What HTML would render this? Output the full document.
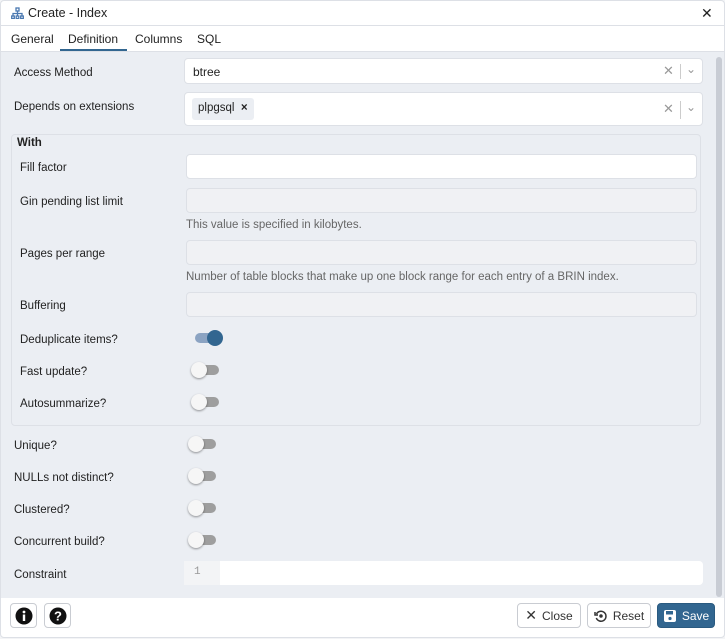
<!DOCTYPE html>
<html><head><meta charset="utf-8"><style>
*{box-sizing:border-box;margin:0;padding:0}
body{width:725px;height:639px;background:#f3f4f6;font-family:"Liberation Sans",sans-serif;font-size:12px;color:#222;position:relative;overflow:hidden}
.dlg{position:absolute;left:0;top:0;width:725px;height:638px;background:#fff;border:1px solid #dde0e6;border-radius:4px;overflow:hidden}
.abs{position:absolute}
.title{left:0;top:0;width:723px;height:25px;border-bottom:1px solid #dde0e6}
.tabs{left:0;top:25px;width:723px;height:26px;border-bottom:1px solid #dde0e6}
.content{left:0;top:51px;width:723px;height:546px;background:#ebeef3}
.lbl{position:absolute;font-size:11.5px;color:#222;margin-top:2px}
.inp{position:absolute;background:#fff;border:1px solid #dde0e6;border-radius:4px}
.dis{background:#f0f1f4}
.help{position:absolute;font-size:11.5px;color:#666;margin-top:2px}
.tg{position:absolute;width:26px;height:10px;border-radius:5px;background:#9e9e9e}
.tg::after{content:"";position:absolute;left:-2px;top:-3px;width:16px;height:16px;border-radius:50%;background:#f6f6f6;box-shadow:0 1px 2px rgba(0,0,0,.4)}
.tg.on{background:#8ba3c2}
.tg.on::after{left:12px;background:#326690;box-shadow:none}
.btn{position:absolute;top:603px;height:25px;border:1px solid #c9ccd2;border-radius:4px;background:#fff;font-size:12px;color:#333;display:flex;align-items:center;justify-content:center;gap:5px}
</style></head><body><div class="dlg">
<div class="abs title">
<svg class="abs" style="left:10px;top:6px" width="13" height="12" viewBox="0 0 13 12" fill="none" stroke="#4a78b0" stroke-width="1.3"><rect x="5" y="1" width="3" height="3"/><path d="M6.5 4v2.5M2 9V6.5h9V9M6.5 6.5V9"/><rect x="0.7" y="9" width="2.6" height="2.5"/><rect x="5.2" y="9" width="2.6" height="2.5"/><rect x="9.7" y="9" width="2.6" height="2.5"/></svg>
<div class="abs" style="left:27px;top:5px;font-size:12.5px">Create - Index</div>
<div class="abs" style="left:700px;top:4px;font-size:14px;color:#222">✕</div>
</div>
<div class="abs tabs">
<div class="abs" style="left:10px;top:6px">General</div>
<div class="abs" style="left:67px;top:6px">Definition</div>
<div class="abs" style="left:59px;top:23px;width:67px;height:2px;background:#326690"></div>
<div class="abs" style="left:134px;top:6px">Columns</div>
<div class="abs" style="left:196px;top:6px">SQL</div>
</div>
<div class="abs content">
<div class="abs" style="left:715px;top:5px;width:6px;height:540px;background:#c8ccd4;border-radius:3px"></div>
<div class="lbl" style="left:13px;top:13px">Access Method</div>
<div class="inp" style="left:183px;top:6px;width:519px;height:26px"><span class="abs" style="left:8px;top:6px">btree</span>
<span class="abs" style="left:478px;top:4px;color:#999;font-size:13px">✕</span><span class="abs" style="left:495px;top:5px;width:1px;height:15px;background:#ccc"></span><span class="abs" style="left:501px;top:3px;color:#999;font-size:12px">⌄</span></div>
<div class="lbl" style="left:13px;top:47px">Depends on extensions</div>
<div class="inp" style="left:183px;top:40px;width:519px;height:34px"><span class="abs" style="left:7px;top:5px;height:22px;background:#ebeef3;border-radius:3px;padding:4px 6px;font-size:11.5px">plpgsql &nbsp;<b>×</b></span>
<span class="abs" style="left:478px;top:8px;color:#999;font-size:13px">✕</span><span class="abs" style="left:495px;top:8px;width:1px;height:18px;background:#ccc"></span><span class="abs" style="left:501px;top:7px;color:#999;font-size:12px">⌄</span></div>
<div class="abs" style="left:10px;top:82px;width:690px;height:292px;border:1px solid #dde0e6;border-radius:4px"></div>
<div class="abs" style="left:16px;top:85px;font-weight:bold;font-size:11.5px">With</div>
<div class="lbl" style="left:19px;top:108px">Fill factor</div>
<div class="inp" style="left:185px;top:102px;width:511px;height:25px"></div>
<div class="lbl" style="left:19px;top:142px">Gin pending list limit</div>
<div class="inp dis" style="left:185px;top:136px;width:511px;height:25px"></div>
<div class="help" style="left:185px;top:165px">This value is specified in kilobytes.</div>
<div class="lbl" style="left:19px;top:194px">Pages per range</div>
<div class="inp dis" style="left:185px;top:188px;width:511px;height:25px"></div>
<div class="help" style="left:185px;top:217px">Number of table blocks that make up one block range for each entry of a BRIN index.</div>
<div class="lbl" style="left:19px;top:246px">Buffering</div>
<div class="inp dis" style="left:185px;top:240px;width:511px;height:25px"></div>
<div class="lbl" style="left:19px;top:280px">Deduplicate items?</div><div class="tg on" style="left:194px;top:281px"></div>
<div class="lbl" style="left:19px;top:312px">Fast update?</div><div class="tg" style="left:192px;top:313px"></div>
<div class="lbl" style="left:19px;top:344px">Autosummarize?</div><div class="tg" style="left:192px;top:345px"></div>
<div class="lbl" style="left:13px;top:386px">Unique?</div><div class="tg" style="left:189px;top:387px"></div>
<div class="lbl" style="left:13px;top:418px">NULLs not distinct?</div><div class="tg" style="left:189px;top:419px"></div>
<div class="lbl" style="left:13px;top:450px">Clustered?</div><div class="tg" style="left:189px;top:451px"></div>
<div class="lbl" style="left:13px;top:482px">Concurrent build?</div><div class="tg" style="left:189px;top:483px"></div>
<div class="lbl" style="left:13px;top:515px">Constraint</div>
<div class="inp" style="left:183px;top:509px;width:519px;height:24px;border:none"><div class="abs" style="left:0;top:0;width:36px;height:24px;background:#f3f4f6;color:#999;padding:5px 0 0 10px;font-family:'Liberation Mono',monospace;font-size:11px">1</div></div>
</div>
<div class="btn" style="left:9px;top:602px;width:27px"><svg width="18" height="18" viewBox="0 0 18 18"><circle cx="9" cy="9" r="8.5" fill="#111"/><rect x="7.8" y="7.5" width="2.4" height="6.5" fill="#fff"/><circle cx="9" cy="5" r="1.4" fill="#fff"/></svg></div>
<div class="btn" style="left:43px;top:602px;width:27px"><svg width="18" height="18" viewBox="0 0 18 18"><circle cx="9" cy="9" r="8.5" fill="#111"/><text x="9" y="13.5" text-anchor="middle" fill="#fff" font-size="13" font-weight="bold" font-family="Liberation Sans">?</text></svg></div>
<div class="btn" style="left:516px;top:602px;width:64px"><span style="font-size:14px">✕</span>Close</div>
<div class="btn" style="left:586px;top:602px;width:64px"><svg width="14" height="14" viewBox="0 0 14 14" fill="none" stroke="#333" stroke-width="1.5"><path d="M2.5 5A5 5 0 1 1 2.3 9"/><path d="M1 3v3h3"/><circle cx="7" cy="7" r="1" fill="#333"/></svg>Reset</div>
<div class="btn" style="left:656px;top:602px;width:58px;background:#326690;border-color:#2a5a80;color:#fff"><svg width="14" height="14" viewBox="0 0 14 14"><rect x="1" y="1" width="12" height="12" rx="2" fill="#fff"/><rect x="3" y="2" width="7" height="3.5" fill="#326690"/><circle cx="7" cy="9.5" r="1.6" fill="#326690"/></svg>Save</div>
</div></body></html>
